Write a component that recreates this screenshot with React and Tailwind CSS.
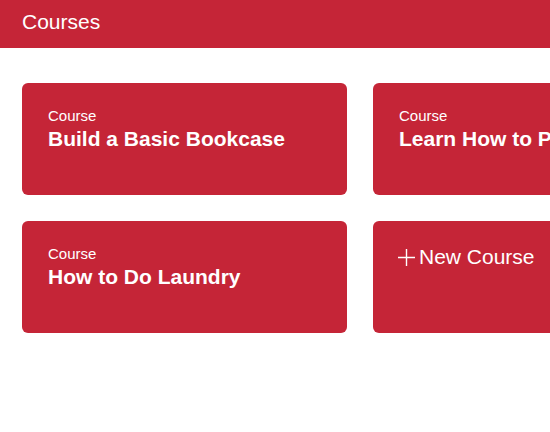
const courses = ['Build a Basic Bookcase', 'Learn How to Program', 'How to Do Laundry']

export default function App() {
  return (
    <div className="w-[550px] h-[432px] overflow-hidden bg-white font-['Liberation_Sans',Arial,sans-serif] text-white">
      <header className="h-12 bg-[#c52537] flex items-center px-[22px] pb-[6px]">
        <h1 className="text-[21px] leading-none">Courses</h1>
      </header>
      <div className="px-[22px] pt-[35px] grid grid-cols-[325px_325px] gap-[26px] w-max">
        {courses.map((c) => (
          <div key={c} className="h-28 bg-[#c52537] rounded-md px-[26px] pt-[24px] whitespace-nowrap">
            <div className="text-[15px] leading-[18px]">Course</div>
            <div className="text-[21px] font-bold leading-6 mt-[2px]">{c}</div>
          </div>
        ))}
        <div className="h-28 bg-[#c52537] rounded-md pl-[25px] pt-[21px] whitespace-nowrap">
          <div className="flex items-center">
            <svg width="17" height="17" viewBox="0 0 17 17" className="shrink-0">
              <path d="M8.5 0v17M0 8.5h17" stroke="white" strokeWidth="1.4" fill="none" />
            </svg>
            <span className="text-[21px] leading-[30px] ml-[4px]">New Course</span>
          </div>
        </div>
      </div>
    </div>
  )
}
